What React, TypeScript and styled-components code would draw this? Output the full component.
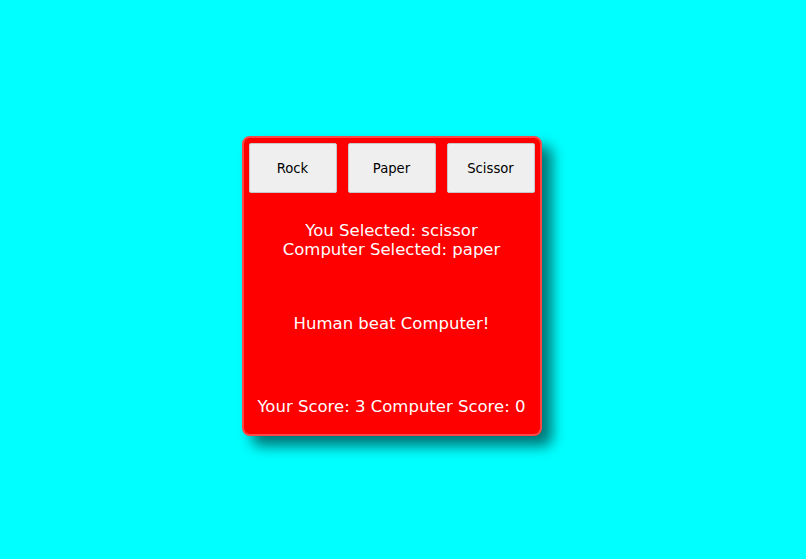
import React from "react";
import styled, { createGlobalStyle } from "styled-components";

const Global = createGlobalStyle`
  html, body { margin: 0; padding: 0; background: #00ffff; }
  body { font-family: "DejaVu Sans", Verdana, sans-serif; }
`;

const Page = styled.div`
  width: 806px;
  height: 559px;
  box-sizing: border-box;
  padding: 12px 23px 0 0;
  display: flex;
  align-items: center;
  justify-content: center;
  background: #00ffff;
`;

const Card = styled.div`
  width: 300px;
  height: 300px;
  box-sizing: border-box;
  background: #ff0000;
  border: 2px solid #ff4646;
  border-radius: 8px;
  box-shadow: 10px 10px 14px rgba(0, 0, 0, 0.55);
  padding: 5px;
  display: flex;
  flex-direction: column;
  color: #ffffff;
`;

const ButtonRow = styled.div`
  display: flex;
  justify-content: space-between;
`;

const ChoiceButton = styled.button`
  width: 88px;
  height: 50px;
  padding: 2px 0 0;
  background: #efefef;
  border: 1px solid #c8c8c8;
  border-radius: 2px;
  font-family: "DejaVu Sans", Verdana, sans-serif;
  font-size: 13.2px;
  color: #000;
`;

const Line = styled.div<{ $top: number }>`
  margin-top: ${(p) => p.$top}px;
  text-align: center;
  font-size: 16.5px;
  line-height: 19px;
`;

export default function App() {
  return (
    <>
      <Global />
      <Page>
        <Card>
          <ButtonRow>
            <ChoiceButton>Rock</ChoiceButton>
            <ChoiceButton>Paper</ChoiceButton>
            <ChoiceButton>Scissor</ChoiceButton>
          </ButtonRow>
          <Line $top={28}>
            You Selected: scissor
            <br />
            Computer Selected: paper
          </Line>
          <Line $top={55}>Human beat Computer!</Line>
          <Line $top={64}>Your Score: 3 Computer Score: 0</Line>
        </Card>
      </Page>
    </>
  );
}
